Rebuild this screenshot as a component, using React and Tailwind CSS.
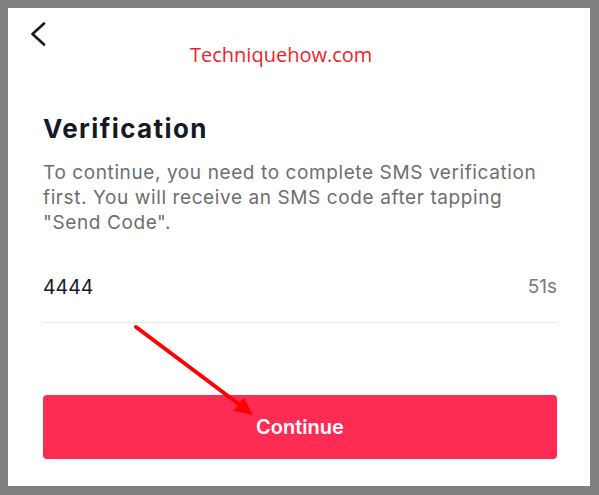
export default function App() {
  return (
    <div className="relative w-[599px] h-[495px] bg-[#808080] pt-[8px] pl-[8px] pr-[9px] pb-[9px] font-['Inter',sans-serif]">
      <div className="relative flex h-full flex-col bg-white px-[35px] pr-[33px]">
        {/* back button */}
        <div className="-ml-[13px] pt-[14px]">
          <svg width="16" height="24" viewBox="0 0 16 24" fill="none">
            <path
              d="M14 1.5 L2.5 12 L14 22.5"
              stroke="#161823"
              strokeWidth="2.6"
              strokeLinecap="round"
              strokeLinejoin="round"
            />
          </svg>
        </div>

        <h1 className="mt-[67px] text-[26px] font-bold leading-[32px] tracking-[1.4px] text-[#161823]">
          Verification
        </h1>
        <p className="mt-[15px] text-[19px] leading-[25px] tracking-[0.6px] text-[#6e6e6e]">
          To continue, you need to complete SMS verification
          <br />
          first. You will receive an SMS code after tapping
          <br />
          "Send Code".
        </p>

        <div className="mt-[38px] flex items-center justify-between">
          <span className="text-[19.5px] leading-[28px] text-[#161823]">4444</span>
          <span className="text-[19px] leading-[28px] text-[#7a7a7a]">51s</span>
        </div>
        <div className="mt-[21px] h-px bg-[#e8e8e8]" />

        <button className="mt-[72px] flex h-[64px] items-center justify-center rounded-[4px] bg-[#fe2c55] text-[20px] font-semibold text-white">
          Continue
        </button>
      </div>

      {/* watermark */}
      <span className="absolute left-[190px] top-[45px] font-['Open_Sans',sans-serif] text-[20px] leading-[20px] text-[#f01e2c]">
        Techniquehow.com
      </span>

      {/* annotation arrow */}
      <svg
        className="pointer-events-none absolute left-0 top-0"
        width="599"
        height="495"
        viewBox="0 0 599 495"
      >
        <line x1="136" y1="327" x2="240" y2="405" stroke="#ff0000" strokeWidth="4" strokeLinecap="round" />
        <polygon points="253,415 233.4,410.8 243.8,397.6" fill="#ff0000" />
      </svg>
    </div>
  );
}
